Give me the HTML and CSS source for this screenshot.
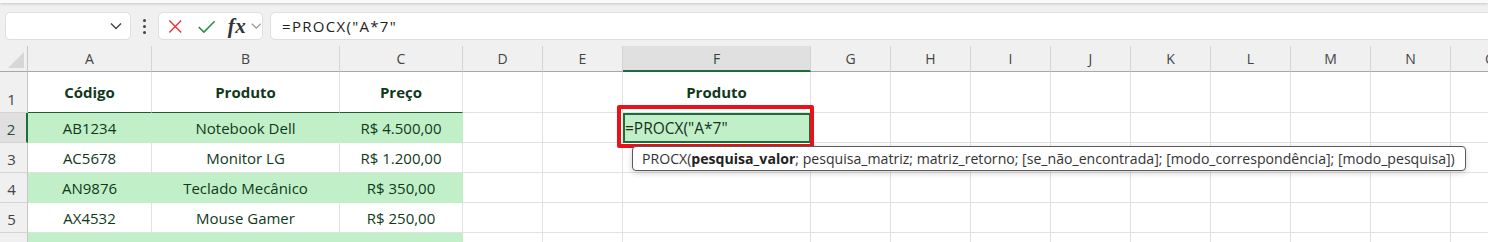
FILE: index.html
```html
<!DOCTYPE html>
<html lang="pt-BR">
<head>
    <meta charset="UTF-8">
    <title>PROCX - Planilha</title>
    <link rel="stylesheet" href="styles.css">
</head>
<body>
    <div class="ribbon-edge"></div>
    <div class="formula-bar">
        <div class="name-box">
            <svg class="chevron" viewBox="0 0 12 8"><path d="M1 1.5l5 5 5-5"/></svg>
        </div>
        <div class="bar-dots">
            <span></span><span></span><span></span>
        </div>
        <div class="fx-buttons">
            <svg class="btn-cancel" viewBox="0 0 16 16"><path d="M1.5 1.5l13 13M14.5 1.5l-13 13"/></svg>
            <svg class="btn-enter" viewBox="0 0 20 16"><path d="M1.5 8.5l5.5 5.5L18.5 2.5"/></svg>
            <span class="fx-label">fx</span>
            <svg class="chevron small" viewBox="0 0 12 8"><path d="M1 1.5l5 5 5-5"/></svg>
        </div>
        <div class="formula-input">=PROCX("A*7"</div>
    </div>

    <div class="sheet">
        <div class="grid" id="grid"></div>
        <div class="cell-highlight"></div>
        <div class="func-tooltip">PROCX(<b>pesquisa_valor</b>; pesquisa_matriz; matriz_retorno; [se_não_encontrada]; [modo_correspondência]; [modo_pesquisa])</div>
    </div>

    <script>
        // colunas e dados da planilha
        const cols = ['A','B','C','D','E','F','G','H','I','J','K','L','M','N','O'];
        const data = {
            1: { A: 'Código', B: 'Produto', C: 'Preço', F: 'Produto' },
            2: { A: 'AB1234', B: 'Notebook Dell', C: 'R$ 4.500,00', F: '=PROCX("A*7"' },
            3: { A: 'AC5678', B: 'Monitor LG', C: 'R$ 1.200,00' },
            4: { A: 'AN9876', B: 'Teclado Mecânico', C: 'R$ 350,00' },
            5: { A: 'AX4532', B: 'Mouse Gamer', C: 'R$ 250,00' }
        };
        const lastRow = 6; // linha 6 fica cortada na borda
        const activeRow = 2, activeCol = 'F';

        const grid = document.getElementById('grid');
        let html = '<div class="corner"></div>';
        cols.forEach(c => {
            html += `<div class="col-head${c === activeCol ? ' active' : ''}">${c}</div>`;
        });

        for (let r = 1; r <= lastRow; r++) {
            const label = r < lastRow ? r : '';
            html += `<div class="row-head${r === activeRow ? ' active' : ''}">${label}</div>`;
            cols.forEach(c => {
                const value = (data[r] && data[r][c]) || '';
                let cls = 'cell';
                const inTable = ['A','B','C'].includes(c);
                if (inTable && r % 2 === 0) cls += ' filled';
                if (inTable && r === 1) cls += ' table-head';
                if (r === 1 && c === 'F') cls += ' bold';
                if (r === activeRow && c === activeCol) cls += ' active';
                html += `<div class="${cls}">${value}</div>`;
            });
        }
        grid.innerHTML = html;
    </script>
</body>
</html>
```

FILE: styles.css
```css
* {
    margin: 0;
    padding: 0;
    box-sizing: border-box;
}

body {
    width: 1488px;
    height: 242px;
    overflow: hidden;
    background: #f0f0f0;
    font-family: "Open Sans", "Liberation Sans", sans-serif;
}

.ribbon-edge {
    height: 3px;
    background: #fafafa;
    box-shadow: 0 1px 3px rgba(0, 0, 0, 0.18);
}

/* barra de fórmulas */
.formula-bar {
    height: 43px;
    display: flex;
    align-items: flex-start;
    padding: 9px 0 0 5px;
    white-space: nowrap;
}

.name-box,
.fx-buttons,
.formula-input {
    height: 28px;
    background: #fff;
    border: 1px solid #dedede;
    border-radius: 5px;
}

.name-box {
    width: 126px;
    display: flex;
    align-items: center;
    justify-content: flex-end;
    padding-right: 8px;
}

.chevron {
    width: 12px;
    height: 8px;
    fill: none;
    stroke: #444;
    stroke-width: 1.4;
}

.chevron.small {
    width: 11px;
    stroke: #9a9a9a;
}

.bar-dots {
    width: 27px;
    height: 28px;
    display: flex;
    flex-direction: column;
    align-items: center;
    justify-content: center;
    gap: 3px;
}

.bar-dots span {
    width: 3px;
    height: 3px;
    border-radius: 50%;
    background: #444;
}

.fx-buttons {
    width: 105px;
    display: flex;
    align-items: center;
    padding-left: 9px;
}

.btn-cancel {
    width: 15px;
    height: 15px;
    fill: none;
    stroke: #e03a3e;
    stroke-width: 1.6;
}

.btn-enter {
    width: 20px;
    height: 15px;
    margin-left: 14px;
    fill: none;
    stroke: #22903f;
    stroke-width: 1.6;
}

.fx-label {
    margin-left: 12px;
    margin-right: 5px;
    font-family: "Liberation Serif", "DejaVu Serif", serif;
    font-style: italic;
    font-weight: bold;
    font-size: 21px;
    color: #333;
    letter-spacing: 0.5px;
    line-height: 1;
}

.formula-input {
    flex: 1;
    margin-left: 7px;
    margin-right: -10px;
    padding-left: 11px;
    font-size: 15px;
    letter-spacing: 1.3px;
    line-height: 26px;
    color: #222;
}

/* planilha */
.sheet {
    position: relative;
    background: #fff;
}

.grid {
    display: grid;
    grid-template-columns: 28px 124px 188px 123px 80px 80px 188px repeat(9, 80px);
    grid-template-rows: 26px 41px repeat(5, 30px);
}

.corner {
    background: #f0f0f0;
    border-right: 1px solid #c6c6c6;
    border-bottom: 1px solid #a8a8a8;
    position: relative;
}

.corner::after {
    content: "";
    position: absolute;
    right: 3px;
    bottom: 3px;
    border-style: solid;
    border-width: 0 0 16px 16px;
    border-color: transparent transparent #d7d7d7 transparent;
}

.col-head {
    background: #f0f0f0;
    border-right: 1px solid #d4d4d4;
    border-bottom: 1px solid #a8a8a8;
    display: flex;
    align-items: center;
    justify-content: center;
    font-size: 14px;
    color: #444;
}

.col-head.active {
    background: #e0e0e0;
    border-bottom: 2px solid #1e6b3c;
    color: #2b4a36;
}

.row-head {
    background: #f0f0f0;
    border-right: 1px solid #c6c6c6;
    border-bottom: 1px solid #d4d4d4;
    display: flex;
    align-items: flex-end;
    justify-content: center;
    padding: 0 4px 3px 0;
    font-size: 15px;
    color: #444;
}

.row-head.active {
    background: #e0e0e0;
    border-right: 2px solid #1e6b3c;
    color: #2b4a36;
}

.cell {
    border-right: 1px solid #e1e1e1;
    border-bottom: 1px solid #e1e1e1;
    display: flex;
    align-items: center;
    justify-content: center;
    font-size: 15px;
    color: #10391b;
    white-space: nowrap;
    overflow: hidden;
}

.cell.filled {
    background: #c1f0c8;
    border-color: #c1f0c8;
}

.cell.table-head {
    font-weight: bold;
    border-bottom-color: #1e5a33;
}

.cell.bold {
    font-weight: bold;
}

.cell.active {
    background: #c1f0c8;
    border: 2px solid #1e6b3c;
    justify-content: flex-start;
    padding-left: 0;
    font-size: 15.5px;
    color: #16311d;
    overflow: visible;
}

/* destaque vermelho e dica da função */
.cell-highlight {
    position: absolute;
    left: 617px;
    top: 59px;
    width: 197px;
    height: 43px;
    border: 4px solid #e8121b;
    border-radius: 2px;
}

.func-tooltip {
    position: absolute;
    left: 632px;
    top: 100px;
    height: 25px;
    padding: 0 10px 0 9px;
    background: #fff;
    border: 1px solid #5a5a5a;
    border-radius: 4px;
    box-shadow: 0 2px 6px rgba(0, 0, 0, 0.18);
    font-size: 14.1px;
    line-height: 23px;
    color: #333;
    white-space: nowrap;
}

.func-tooltip b {
    color: #222;
}
```
